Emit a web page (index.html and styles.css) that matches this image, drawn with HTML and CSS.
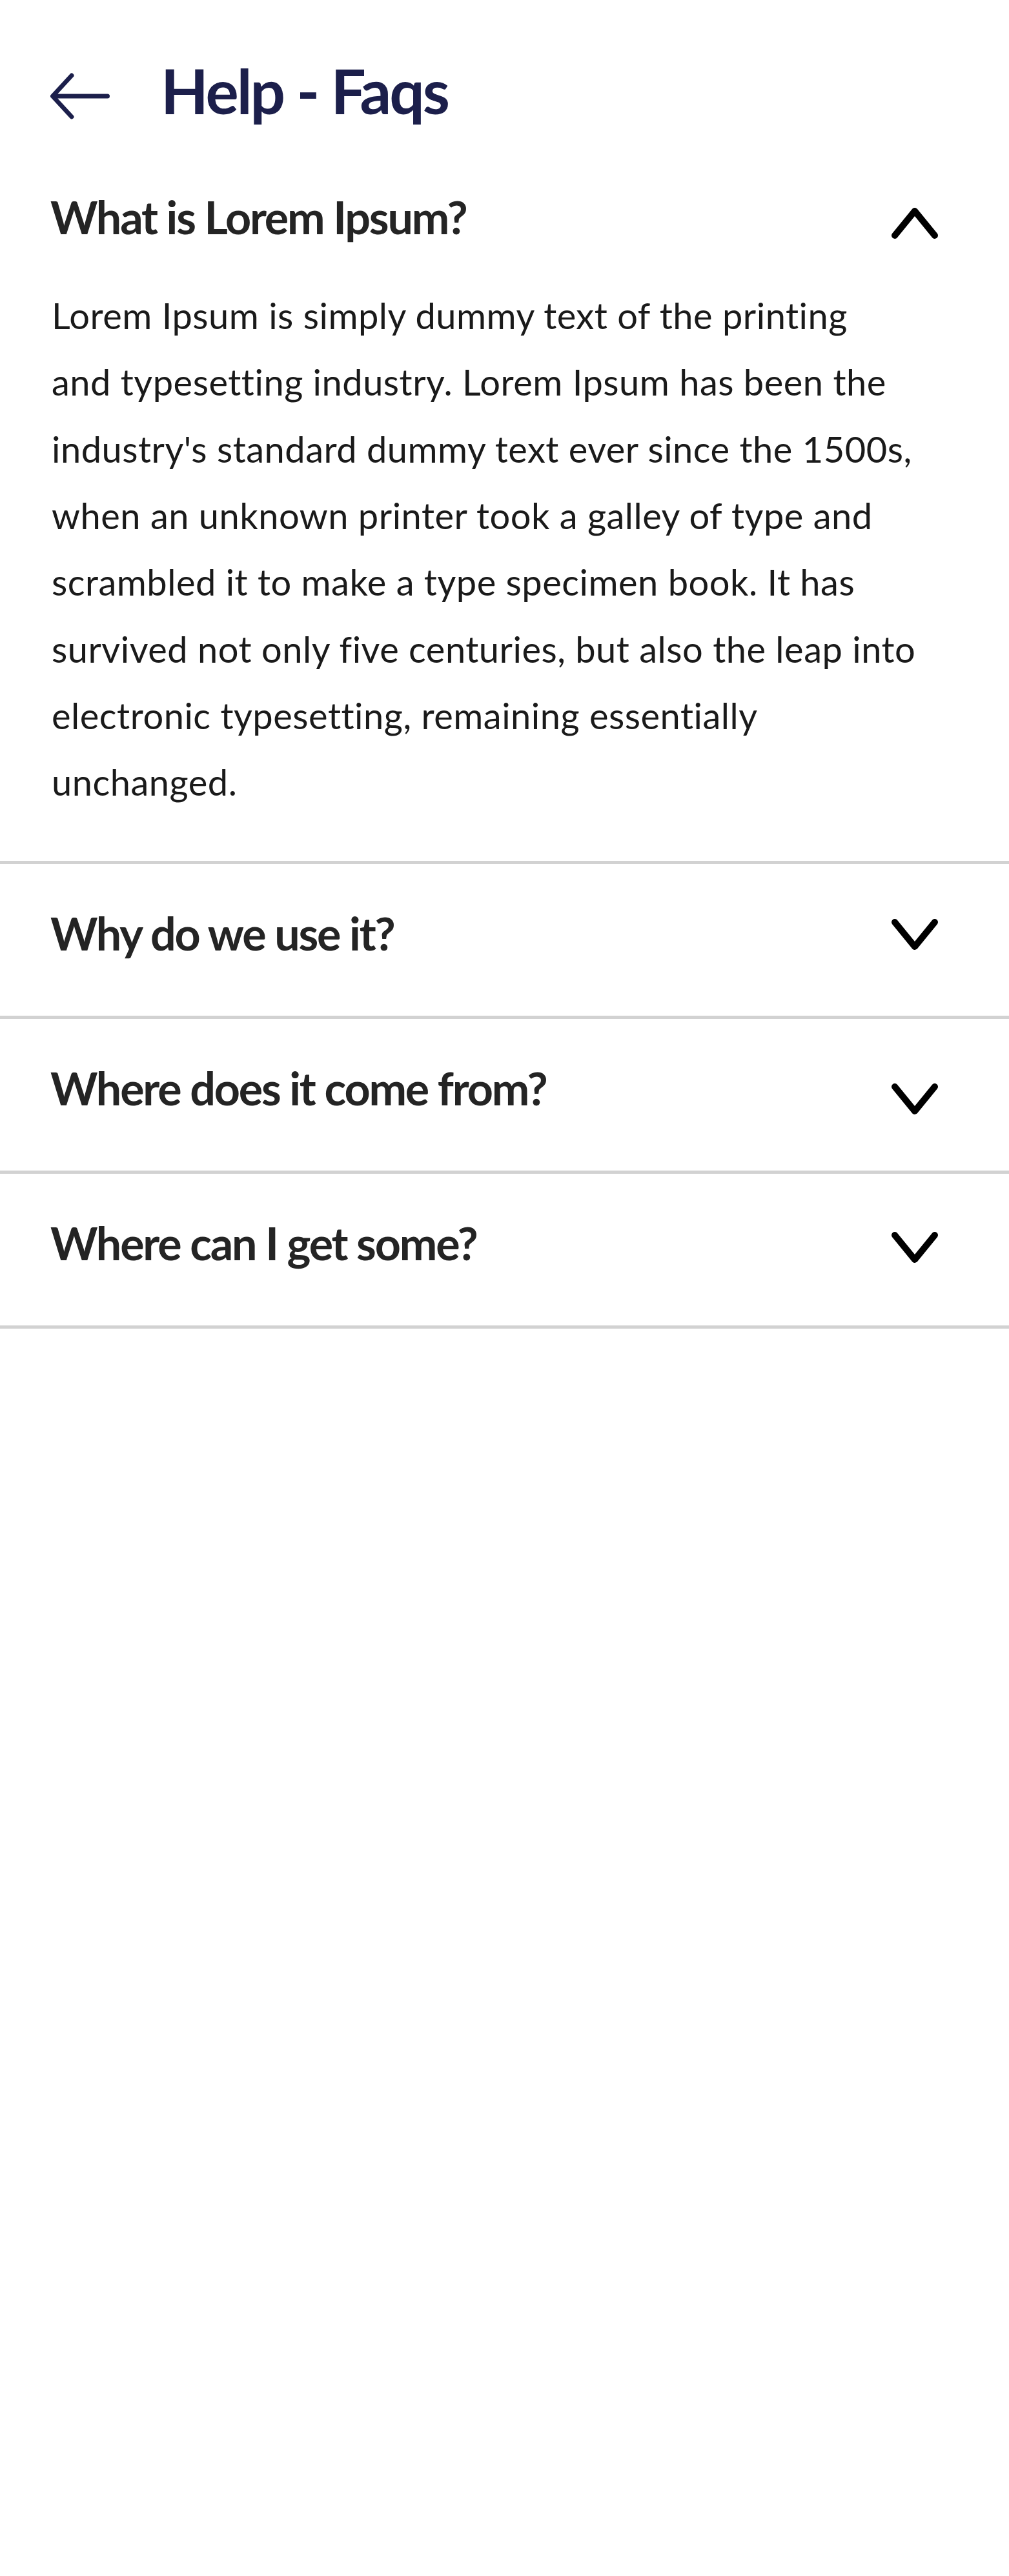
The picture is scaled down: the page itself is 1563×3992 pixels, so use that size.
FILE: index.html
```html
<!DOCTYPE html>
<html lang="en">
<head>
<meta charset="utf-8">
<title>Help - Faqs</title>
<link rel="stylesheet" href="styles.css">
</head>
<body>
<header class="topbar">
  <svg class="back" width="92" height="72" viewBox="0 0 92 72" aria-hidden="true">
    <path d="M88.5 36 H4 M33 4 L3.5 36 L33 68" fill="none" stroke="#1c1f4b" stroke-width="7" stroke-linecap="round" stroke-linejoin="round"/>
  </svg>
  <h1 class="title">Help - Faqs</h1>
</header>

<section class="faq">
  <div class="item open">
    <div class="q">
      <span class="q-text">What is Lorem Ipsum?</span>
      <svg class="chev chev-up" width="74" height="50" viewBox="0 0 74 50" aria-hidden="true">
        <path d="M6 44 L37 6 L68 44" fill="none" stroke="#000" stroke-width="10" stroke-linecap="round" stroke-linejoin="round"/>
      </svg>
    </div>
    <p class="a">Lorem Ipsum is simply dummy text of the printing<br>and typesetting industry. Lorem Ipsum has been the<br>industry's standard dummy text ever since the 1500s,<br>when an unknown printer took a galley of type and<br>scrambled it to make a type specimen book. It has<br>survived not only five centuries, but also the leap into<br>electronic typesetting, remaining essentially<br>unchanged.</p>
  </div>
  <div class="item">
    <div class="q">
      <span class="q-text">Why do we use it?</span>
      <svg class="chev" width="74" height="50" viewBox="0 0 74 50" aria-hidden="true">
        <path d="M6 6 L37 44 L68 6" fill="none" stroke="#000" stroke-width="10" stroke-linecap="round" stroke-linejoin="round"/>
      </svg>
    </div>
  </div>
  <div class="item">
    <div class="q">
      <span class="q-text">Where does it come from?</span>
      <svg class="chev chev-low" width="74" height="50" viewBox="0 0 74 50" aria-hidden="true">
        <path d="M6 6 L37 44 L68 6" fill="none" stroke="#000" stroke-width="10" stroke-linecap="round" stroke-linejoin="round"/>
      </svg>
    </div>
  </div>
  <div class="item">
    <div class="q">
      <span class="q-text">Where can I get some?</span>
      <svg class="chev chev-mid" width="74" height="50" viewBox="0 0 74 50" aria-hidden="true">
        <path d="M6 6 L37 44 L68 6" fill="none" stroke="#000" stroke-width="10" stroke-linecap="round" stroke-linejoin="round"/>
      </svg>
    </div>
  </div>
</section>
</body>
</html>
```

FILE: styles.css
```css
* { box-sizing: border-box; }

html, body {
  margin: 0;
  padding: 0;
  background: #ffffff;
}

body {
  font-family: Lato, "Open Sans", "Liberation Sans", sans-serif;
  color: #1a1a1a;
  width: 1563px;
  min-height: 3992px;
}

.topbar {
  display: flex;
  align-items: flex-start;
  padding: 82px 0 0 78px;
  margin-bottom: 32px;
}

.back {
  display: block;
  flex: none;
  margin-top: 31px;
}

.title {
  margin: 0 0 0 79px;
  font-size: 96px;
  line-height: 1.2;
  font-weight: 700;
  color: #1c1f4b;
  letter-spacing: -3px;
}

.faq {
  display: flex;
  flex-direction: column;
}

.item {
  border-bottom: 5px solid #d2d2d2;
}

.q {
  display: flex;
  justify-content: space-between;
  align-items: flex-start;
  padding: 65px 109px 86px 78px;
}

.item.open .q {
  padding-bottom: 59px;
}

.q-text {
  font-size: 70px;
  line-height: 84px;
  font-weight: 700;
  color: #242424;
  letter-spacing: -2.2px;
}

.chev {
  display: block;
  flex: none;
  margin-top: 19px;
}

.chev-up { margin-top: 27px; }
.chev-low { margin-top: 34px; }
.chev-mid { margin-top: 24px; }

.a {
  margin: 0;
  padding: 0 109px 70px 80px;
  font-size: 56px;
  line-height: 103.3px;
  font-weight: 400;
  color: #1a1a1a;
  letter-spacing: 0.5px;
  white-space: nowrap;
}
```
